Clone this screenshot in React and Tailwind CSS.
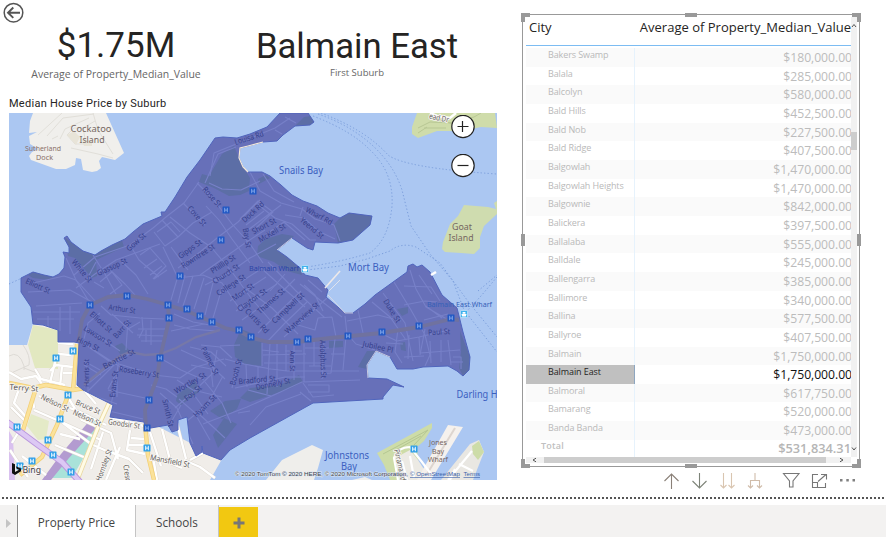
import React from "react";

const LAND =
  "M21 278L33 272L44 275L53 277L59 274L64 268L65 257L63 252L69 253L69 247L64 238L67 236L71 242L83 251L95 255L101 251L112 245L125 239L133 232L143 224L162 216L161 212L165 212L175 197L187 177L200 160L215 138L223 137L237 138L250 134L267 127L280 113H308L314 122L310 125L295 126L283 135L277 141L263 142L248 146L240 148L239 158L243 167L248 172H262L270 176L281 185L292 195L303 201L317 206L328 213L340 218L349 213L372 216L370 225L353 240L338 243L315 242L313 250L307 248L292 238L277 250L287 257L300 268L305 275L318 278L328 290L326 297L345 313H353L365 304L375 295L407 272L408 266L413 264L417 267L422 265L430 272L442 295L457 308L463 332L470 357L469 370L463 376L457 371L448 366L423 367L413 369H397L390 357L376 351L367 365L368 378L387 379L404 387L393 385L383 397V399L313 403L250 438L230 450L221 460L203 453L202 446V452L196 456L190 443L187 417L178 420V430L172 432L168 425L145 429L144 422L110 417L113 405L83 390L77 385L79 343L74 342H58V330L43 325L33 324L31 307L21 292Z";

const WOODS = [
  "M65 238L71 242L83 251L95 255L101 251L122 240L124 247L96 260L97 276L92 278L75 258L68 256Z",
  "M222 154L234 146L239 158L243 167L250 178L249 191L240 195L229 196L214 188L199 182L202 174L209 176Z",
  "M295 126L304 117L311 116L314 122L310 125Z",
  "M340 218L349 213L372 216L370 225L353 240L338 243L334 224Z",
  "M277 250L287 257L300 268L302 275L287 271L274 262L257 256L258 246L266 239L282 234L294 236Z",
  "M241 329L251 333L262 343L262 366L245 364L235 357L234 345Z",
  "M28 275L33 272L53 277L48 280L33 278Z",
  "M460 331L470 357L469 370L463 376L459 368L461 352Z",
  "M367 351L376 351L367 365V369L358 367Z",
  "M250 388L280 385L299 375L303 382L289 389L250 402L240 398Z",
  "M115 346L122 343L131 352L122 357Z",
  "M177 395L195 381L200 391L181 405L176 401Z",
  "M210 411L225 401L241 399L237 409L222 419Z",
  "M213 435L224 418L237 424L218 448Z",
  "M258 179L266 175L270 178L259 184Z",
  "M397 309L408 307L408 313L402 316Z",
  "M329 341L343 341V347L329 348Z",
  "M400 343L405 342L406 351L401 350Z",
];

const MINOR = [
  "M33 283L64 276L76 280L97 303M28 292L70 290L92 302M33 312H80M36 306L82 303M60 307V331M70 306V334M48 316V326M37 319H74",
  "M66 258L76 280L88 300M74 275L95 257L130 245L153 228M93 255L105 274L117 296M96 262L86 281M76 288L95 274L116 260L160 244",
  "M130 245L139 260L159 277M120 260L136 275L148 294M108 268L125 284L135 295M100 282L112 272L122 285L110 294M94 282L104 288M140 255L150 248L166 266L153 279M144 268L157 259M150 275L162 266M154 279L167 270",
  "M153 228L166 217L184 203L199 182M162 220L178 237L165 246L154 232M157 232L171 222L180 232M178 237L193 223L212 212M170 217L190 233L211 247L232 272L251 298L270 320",
  "M197 183L214 200L232 224L250 244L263 263M206 206L219 220L232 239L250 263M183 203L205 225M209 183L222 189L241 190L260 181M205 183L218 154L236 147",
  "M163 247L178 278L203 275L222 283L241 311M171 247L188 270M178 276L171 300M185 275L178 303M193 276L183 306M204 278L194 309M213 283L205 315M222 288L213 318",
  "M178 268L200 252L217 238L238 222L260 200M200 275L221 260L245 243L265 230M205 285L229 273L250 258L276 244M222 293L244 280L264 267M230 301L246 290L266 277M236 311L255 298L277 284M242 320L262 306L286 288M258 333L279 312L301 291M267 342L285 323L307 302M284 337L303 320L327 298",
  "M261 268L281 286L305 307M268 262L295 290L325 318M248 290L272 308L298 334M285 274L270 291M295 279L282 292M304 285L315 295L323 311M300 284L320 300L342 317M308 280L322 292M298 325L315 330L318 318L332 317L336 337",
  "M250 172L260 191L281 203L302 209L315 219L334 225L340 241M263 174L274 191L294 202M256 203L275 218L292 224M240 219L258 201L273 212L256 228M246 225L264 211M248 230L281 205M285 215L304 218L318 231L335 239M265 235L284 222L305 240M300 216L303 207M292 224L310 240H316",
  "M210 176L214 153L246 140L275 128L290 118M275 130L282 134M285 117L296 123",
  "M101 306L111 315L140 318L164 319M112 314L133 333M128 319L126 350M142 317L143 330L139 338M100 313L88 323L83 343L125 370M88 329L120 351M83 343L109 361M140 322L128 329",
  "M138 329H167M137 335L165 336M151 320V345M141 341H163M146 330V342M120 360L101 373L84 387M119 358L116 380L109 415M119 364L132 368L158 375M118 370L108 389M84 365L101 375M130 353L115 364L87 392",
  "M100 370L84 361M88 377V393M94 396L117 404M108 390L145 398M117 380V397M109 411L143 419M151 385L166 389L177 397M154 375L180 378L196 367L224 359",
  "M171 331L204 324L220 327M174 325L190 329L217 331M174 314L193 322L210 325M160 358L181 370L204 380M181 350L207 362L225 379M190 347L211 352L226 366M191 365L211 369L213 387M201 345L220 347L232 358",
  "M177 380L193 390L222 397M160 393L177 408L193 444M179 399L194 412L210 440M192 392L208 414M205 382L222 403L231 423M223 376L207 405L187 421M175 408L192 393L213 373L217 350M199 414L225 438M181 405L170 424M203 424L247 407L274 395L302 382L360 380",
  "M220 346L240 345M225 359L244 364L271 369L287 371H359M262 343V366M262 350L279 352M237 367L232 388M246 365L247 387M258 367V383M270 343L267 394M277 344V387M286 345V371M294 343V380M304 343V382M314 341V366M324 340L322 379M335 339L331 373L320 374M263 355L306 354M264 363H323M305 348H329M309 366H331M331 354H345M285 351H302M346 336L343 370",
  "M235 388L285 377L305 377M303 383L313 397L334 395M308 385H329V392H308M248 390L271 396M238 413L250 411M300 392L311 401M250 425L266 407L301 394",
  "M345 316L347 334L356 344L375 350M358 310L363 333M347 321L378 315L401 321M372 302L390 317L406 340M383 293L405 323L413 361M394 282L411 310L425 335L430 355L425 366M398 329L395 352L402 363M409 335L408 359M425 329L420 355",
  "M380 333L397 341L419 337L449 330M386 343L403 344M404 357L424 356M419 337L420 353L460 350M430 341L431 363M441 340V362M448 340L451 365M404 286L431 287L440 301M410 270L416 289L426 307L450 321M404 305L425 301L437 302M426 306L442 318M419 275L432 294M424 320L448 314M453 357H461V369M450 362H463",
];

const GREY_ROADS = [
  "M78 345L82 320L90 305L108 297L127 295L147 299L168 305L187 311L212 322L225 328L239 331L252 338L268 342L297 342L330 338L382 333L419 327L451 319L459 320",
  "M168 305L169 320L160 358L157 378L151 394L145 410L146 429",
];

const LOCAL_STREETS =
  "M58 343L73 344M58 354L71 355M50 371L56 365L73 367M35 369L41 379L65 385M56 358L50 383M62 366L60 387M63 373H73M9 372L21 379L36 376L42 384M20 386L14 403L27 418M11 407L25 421L12 443M39 396L80 412L106 425M34 410L66 424L101 440M33 400L34 408M81 388L105 399M84 390L96 404M69 399L82 420L111 433L118 459M63 423L91 444L111 453M60 434L80 439M55 445L86 458M110 417L144 426M130 430L127 450L145 454M131 438L144 439M128 445H145M103 432L91 469M120 447L106 480M150 455L182 468M150 432L161 466M162 429L170 460M177 423L186 459M153 457L157 480M10 450L28 477M22 456L46 475M184 460L200 467L215 478M110 452L129 459L143 473M190 460L203 453";

const STREETS = [
  ["Rose St", 212, 197, 48, 24], ["Cove St", 197, 216, 48, 24], ["Gow St", 136, 242, -42, 23],
  ["Glassop St", 112, 267, -25, 32], ["White St", 82, 271, 50, 27], ["Elliott St", 38, 286, 24, 26],
  ["Gipps St", 190, 249, -35, 27], ["Rowntree St", 198, 256, -33, 38], ["Phillip St", 223, 264, -33, 28],
  ["Church St", 226, 274, -33, 30], ["College St", 231, 285, -33, 33], ["Mort St", 243, 292, -35, 25],
  ["Clayton St", 252, 300, -36, 34], ["Thames St", 271, 301, -42, 34], ["Curtis Rd", 257, 321, 47, 31],
  ["Campbell St", 288, 308, -43, 41], ["Waterview St", 302, 318, -42, 43], ["Louisa Rd", 249, 138, -17, 30],
  ["Dock Rd", 253, 212, -42, 27], ["Short St", 264, 226, -28, 26], ["McKell St", 272, 233, -30, 30],
  ["Bay St", 247, 238, 80, 20], ["Wharf Rd", 319, 216, 28, 29], ["Yeend St", 312, 228, 40, 28],
  ["Arthur St", 122, 309, 8, 27], ["Elliott St", 101, 322, 42, 27], ["Barr St", 122, 329, -48, 22],
  ["Lawson St", 98, 336, 32, 32], ["High St", 88, 344, 25, 24], ["Beattie St", 119, 359, -27, 35],
  ["Harris St", 86, 373, -90, 28], ["Roseberry St", 139, 372, 9, 40], ["Evans St", 114, 384, -83, 27],
  ["Palmer St", 210, 361, 63, 30], ["Booth St", 236, 372, -75, 27], ["Wortley St", 190, 383, -30, 35],
  ["Foy St", 193, 393, -40, 20], ["Hyam St", 205, 406, -45, 29], ["Smith St", 168, 413, 77, 28],
  ["Adolphus St", 323, 359, 88, 38], ["Ann St", 293, 361, 90, 21], ["Bradford St", 257, 380, -5, 37],
  ["Donnelly St", 273, 384, -12, 35], ["Jubilee Pl", 378, 347, 12, 31], ["Duke St", 392, 311, 58, 26],
  ["Paul St", 439, 332, -3, 22],
];

const OUTER_STREETS = [
  ["Mansfield St", 170, 461, 11, 40], ["Goodsir St", 124, 424, 8, 32], ["Bruce St", 88, 407, 23, 26],
  ["Nelson St", 55, 403, 26, 30], ["Nelson St", 87, 418, 24, 30], ["Terry St", 24, 388, 4, 29],
  ["Hornsley St", 104, 465, -70, 33], ["Cresc", 127, 473, 82, 17], ["ead Dr", 439, 118, 12, 20],
  ["Pirrama Rd", 400, 465, 78, 32],
];

const STOPS = [
  [226, 210], [221, 240], [180, 276], [127, 296], [90, 305], [168, 305], [169, 318], [187, 309],
  [200, 316], [212, 322], [239, 330], [251, 337], [160, 358], [149, 400], [147, 428], [297, 342],
  [308, 339], [348, 336], [382, 332], [419, 326], [451, 318], [253, 191],
];
const OUTER_STOPS = [
  [147, 448], [73, 351], [56, 358], [68, 395], [60, 419], [17, 427], [48, 440], [53, 455], [32, 461],
  [20, 466], [71, 472], [414, 449],
];

const PLACES = [
  ["Cockatoo", 91, 132, 41, 9.2, "#75665f"], ["Island", 92, 143, 25, 9.2, "#75665f"],
  ["Sutherland", 43, 151, 36, 7.8, "#8a7068"], ["Dock", 44.5, 160, 17, 7.8, "#8a7068"],
  ["Goat", 462, 230, 20, 9, "#75665f"], ["Island", 461, 241, 25, 9, "#75665f"],
  ["Snails Bay", 301, 173.5, 44, 10.3, "#3c5fc0"], ["Mort Bay", 368.5, 270.5, 41, 10.3, "#3c5fc0"],
  ["Darling H", 477, 398, 41, 10, "#3c5fc0"], ["Johnstons", 347, 458.5, 44, 10, "#3c5fc0"],
  ["Bay", 349, 469.5, 16, 10, "#3c5fc0"], ["Jones", 438, 445, 18, 7.8, "#75665f"],
  ["Bay", 438, 453.5, 12, 7.8, "#75665f"], ["Wharf", 438, 462, 20, 7.8, "#75665f"],
  ["Balmain Wharf", 274, 271, 50, 7.6, "#2b45a8"], ["Balmain East Wharf", 459.5, 307, 65, 7.6, "#3560b8"],
];

function StreetName({ item, color, halo }) {
  const [name, x, y, angle, len] = item;
  return (
    <text
      x="0"
      y="2.6"
      transform={`translate(${x} ${y}) rotate(${angle})`}
      textAnchor="middle"
      textLength={len}
      lengthAdjust="spacingAndGlyphs"
      fontSize="7.8"
      fill={color}
      stroke={halo}
      strokeWidth={halo ? 1.8 : 0}
      paintOrder="stroke"
    >
      {name}
    </text>
  );
}

function Stop({ x, y, fill, mark }) {
  return (
    <g transform={`translate(${x} ${y})`}>
      <rect x="-3.5" y="-3.5" width="7" height="7" rx=".6" fill={fill} />
      <path d="M-1.3 -2.2V2.2M1.3 -2.2V2.2M-1.5 .1H1.5" stroke={mark} strokeWidth="1" fill="none" />
    </g>
  );
}

function Ferry({ x, y }) {
  return (
    <g transform={`translate(${x} ${y})`}>
      <rect x="-3.5" y="-3.5" width="7" height="7" rx="1" fill="#3fb2ee" stroke="#d5ecfb" strokeWidth=".6" />
      <path d="M-2.6 0H2.6L1.8 2.4H-1.8ZM-1.4 -2H1.4V-.3H-1.4Z" fill="#fff" />
    </g>
  );
}

function SuburbMap() {
  return (
    <svg viewBox="9 113 488 367" className="block h-[367px] w-[488px]" fontFamily="'Noto Sans','Open Sans',sans-serif">
      <defs>
        <clipPath id="suburb"><path d={LAND} /></clipPath>
      </defs>
      <rect x="9" y="113" width="488" height="367" fill="#abc7f2" />

      {/* Cockatoo Island */}
      <path d="M33 113H106L124 153L115 160L102 157L99 161L101 168L97 171L92 172L83 170L81 159L76 158L75 165L66 169L56 169L31 160L29 156L32 152L38 149L30 144L29 136L37 132L29 133L30 121Z" fill="#f0efec" />
      <path d="M38 135L62 113M47 136L63 118L94 114M60 139L65 129L89 118M67 135L74 128L83 128L86 144H75ZM93 113L98 130L113 154M52 139L58 136M71 148L98 154L113 158M83 128L95 121" stroke="#e1dfd9" strokeWidth="1" fill="none" />
      <path d="M67 135L74 131L80 137L76 145ZM82 140H92V146H84Z" fill="#e8e4d8" />

      {/* Parkland in the harbour */}
      <path d="M417 113H495L497 128L481 127L462 131L437 131L418 138L412 134V127Z" fill="#cfdcaa" />
      <path d="M418 128L430 122L452 123L462 131M424 128H446M429 116L450 123L474 117L481 113M418 133L427 127" stroke="#b8c794" fill="none" />
      <path d="M430 113L437 116L450 118L456 113" stroke="#fff" strokeWidth="2.5" fill="none" />
      <path d="M497 201L494 203L496 209L488 207L464 205L458 216L450 224L443 242L442 249L445 252L461 253L474 254L480 248V237L484 226L497 214Z" fill="#cfdcaf" />

      {/* Ferry lines */}
      <path d="M321 113Q366 130 388 155Q405 168 497 174M318 114Q350 125 372 145Q394 165 402 190L411 226L430 254L453 281L464 310L497 352M313 116Q352 131 370 150Q394 172 392 206Q389 239 370 253Q340 262 307 267M307 270L340 266L367 259L390 251Q401 242 416 247L440 263L470 304L497 337M497 277L481 296L466 312M9 284L22 278M478 291L497 275" fill="none" stroke="#7b9edc" strokeWidth="1" strokeDasharray="1.3 2.2" />

      {/* Mainland south of the suburb */}
      <path d="M9 345H27L33 324H79L145 420L222 459L210 480H9Z" fill="#f0ede9" />
      <path d="M33 325L58 330V369L48 368H35L28 345Z" fill="#e2e8c0" />
      <path d="M31 414L49 421L46 439L38 440L27 426Z" fill="#e4eac7" />
      <path d="M9 356Q19 350 24 366V370M23 345Q31 356 29 365L9 374M24 368L37 373" fill="none" stroke="#dddad5" />
      <path d="M97 418L101 427L72 478H45L74 444Z" fill="#a9e2d9" />
      <path d="M91 419L95 429L69 458L51 480H42L61 454Z" fill="#b39bd0" />
      <path d="M9 431V480H15L13 438Z" fill="#d9c1ef" />

      {/* Local streets */}
      <g fill="none" strokeLinejoin="round">
        <path d={LOCAL_STREETS} stroke="#dcd7cf" strokeWidth="3.2" />
        <path d={LOCAL_STREETS} stroke="#fff" strokeWidth="2.4" />
      </g>
      <g fill="none" strokeLinejoin="round">
        <path d="M9 383L33 388L46 385L73 390L85 388M36 388L23 430M70 390L57 425L42 457L20 475M77 344L73 390M145 424L148 455L154 480" stroke="#f2cf77" strokeWidth="4.4" />
        <path d="M9 383L33 388L46 385L73 390L85 388M36 388L23 430M70 390L57 425L42 457L20 475M77 344L73 390M145 424L148 455L154 480" stroke="#fbe29a" strokeWidth="2.9" />
        <path d="M109 403L98 427L78 478" stroke="#ead9a0" strokeWidth="4.6" />
        <path d="M109 403L98 427L78 478" stroke="#fffbe6" strokeWidth="3" />
        <path d="M7 422L38 445L62 462L80 482" stroke="#b995dd" strokeWidth="6.4" />
        <path d="M7 422L38 445L62 462L80 482" stroke="#dcc8f4" strokeWidth="4.6" />
      </g>

      {/* Johnstons Bay wharves */}
      <path d="M266 480L282 460L312 445L323 450L318 468L314 480ZM352 480L365 477L372 480Z" fill="#efeeeb" />
      <path d="M377 453L432 423L432 428L424 441L417 447L420 480H390L384 465Z" fill="#cddca8" />
      <path d="M383 454L428 430L414 445M394 451L421 436" stroke="#b5c792" fill="none" />
      <path d="M395 458L410 450L418 460L431 480H402Z" fill="#eceae4" />
      <path d="M448 425L463 427L431 480H417Z" fill="#f5f1ed" />
      <path d="M455 428L427 474" stroke="#ddd5cf" strokeWidth="2" fill="none" />
      <path d="M441 480L470 444L479 440L484 452L473 480Z" fill="#e9e7e2" />
      <path d="M472 446L479 441L484 452L478 460L473 454Z" fill="#cddca8" />
      <path d="M448 480L472 451M459 464L473 471M398 480L394 458Q398 447 410 447L422 462L431 474M402 461L407 480M410 456L414 478M455 469L450 480" stroke="#fff" strokeWidth="2.2" fill="none" />

      {/* Highlighted suburb */}
      <path d={LAND} fill="#6770b9" />
      <g clipPath="url(#suburb)">
        {WOODS.map((d) => <path key={d} d={d} fill="#5c6ea6" />)}
        {MINOR.map((d) => <path key={d} d={d} fill="none" stroke="#7780c8" strokeWidth="1.1" strokeLinejoin="round" />)}
        <path d="M84 385L101 371L120 356L130 352L145 355L160 354L176 348L196 337L220 330" fill="none" stroke="#7678a8" strokeWidth="2.4" />
        {GREY_ROADS.map((d) => <path key={d} d={d} fill="none" stroke="#70729f" strokeWidth="3.8" strokeLinejoin="round" />)}
      </g>
      <path d={LAND} fill="none" stroke="#5065bd" strokeWidth="1" strokeLinejoin="round" />
      <path d="M263 142L248 146L240 148L239 158L243 167L248 172" fill="none" stroke="#f5ead8" strokeWidth="1.2" />
      <path d="M390 357L376 351L367 365L368 378M328 295L345 313H353M292 238L277 250" fill="none" stroke="#e5e0e5" strokeWidth=".8" />
      <path d="M325 288L340 271" stroke="#eee9e9" strokeWidth="1.6" />
      <path d="M329 291L340 280" stroke="#dfe3ed" strokeWidth="1" />
      <path d="M431 275L436 272" stroke="#fff" strokeWidth="2.6" />

      {STREETS.map((s) => <StreetName key={s[0] + s[1]} item={s} color="#353f8b" />)}
      {OUTER_STREETS.map((s) => <StreetName key={s[0] + s[1]} item={s} color="#625c5a" halo="#f7f5f2" />)}
      {STOPS.map(([x, y]) => <Stop key={`${x}-${y}`} x={x} y={y} fill="#2158c4" mark="#7fa4e8" />)}
      {OUTER_STOPS.map(([x, y]) => <Stop key={`${x}-${y}`} x={x} y={y} fill="#2f9fe8" mark="#f0f9ff" />)}
      {PLACES.map(([name, x, y, len, size, color]) => (
        <text key={name + x} x={x} y={y} textAnchor="middle" textLength={len} lengthAdjust="spacingAndGlyphs" fontSize={size} fill={color}>
          {name}
        </text>
      ))}
      <Ferry x={305} y={269} />
      <Ferry x={464} y={314} />

      {/* Provider mark */}
      <path d="M12 463L15 464.2V472L19 469.8L16.8 468.7L15.8 466.2L21 468.4V471.2L15 475L12 473.3Z" fill="#111" />
      <text x="22.5" y="472.5" textLength="18.5" lengthAdjust="spacingAndGlyphs" fontSize="9.5" fill="#444" stroke="#f4f0f6" strokeWidth="1.6" paintOrder="stroke">Bing</text>
      <g fontFamily="'Liberation Sans',sans-serif" fontSize="6.2">
        <text x="235" y="476" textLength="173" lengthAdjust="spacingAndGlyphs" fill="#40444c" stroke="#dfe7f3" strokeWidth="1" paintOrder="stroke">
          © 2020 TomTom © 2020 HERE, © 2020 Microsoft Corporation,
        </text>
        <text x="410" y="476" textLength="50" lengthAdjust="spacingAndGlyphs" fill="#3a5fa8" textDecoration="underline">© OpenStreetMap</text>
        <text x="463.5" y="476" textLength="16.5" lengthAdjust="spacingAndGlyphs" fill="#3a5fa8" textDecoration="underline">Terms</text>
      </g>
    </svg>
  );
}

const ROWS = [
  ["Bakers Swamp", "$180,000.00"], ["Balala", "$285,000.00"], ["Balcolyn", "$580,000.00"],
  ["Bald Hills", "$452,500.00"], ["Bald Nob", "$227,500.00"], ["Bald Ridge", "$407,500.00"],
  ["Balgowlah", "$1,470,000.00"], ["Balgowlah Heights", "$1,470,000.00"], ["Balgownie", "$842,000.00"],
  ["Balickera", "$397,500.00"], ["Ballalaba", "$555,000.00"], ["Balldale", "$245,000.00"],
  ["Ballengarra", "$385,000.00"], ["Ballimore", "$340,000.00"], ["Ballina", "$577,500.00"],
  ["Ballyroe", "$407,500.00"], ["Balmain", "$1,750,000.00"], ["Balmain East", "$1,750,000.00"],
  ["Balmoral", "$617,750.00"], ["Bamarang", "$520,000.00"], ["Banda Banda", "$473,000.00"],
];

function Row({ city, value, index }) {
  const selected = city === "Balmain East";
  return (
    <div className={`flex h-[18.67px] ${index % 2 ? "bg-white" : "bg-[#fafafa]"}`}>
      <div className={`w-[109px] shrink-0 border-r pl-[22px] text-[9px] leading-[13px] tracking-[-0.1px] ${selected ? "border-[#8ea6c0] bg-[#c0c0c0] text-[#252423]" : "border-[#e6f2fc] text-[#b9b9b9]"}`}>
        {city}
      </div>
      <div className={`flex grow justify-end overflow-hidden whitespace-nowrap text-[12.2px] leading-[20px] tracking-[-0.04px] ${selected ? "bg-white text-[#111]" : "text-[#bcbcbc]"}`}>
        <span className="-mr-px">{value}</span>
      </div>
    </div>
  );
}

function Handles() {
  return (
    <>
      <i className="absolute -left-[2px] -top-[2px] size-[9px] border-l-4 border-t-4 border-[#999]" />
      <i className="absolute -right-[2px] -top-[2px] size-[9px] border-r-4 border-t-4 border-[#999]" />
      <i className="absolute -bottom-[2px] -left-[2px] size-[9px] border-b-4 border-l-4 border-[#999]" />
      <i className="absolute -bottom-[2px] -right-[2px] size-[9px] border-b-4 border-r-4 border-[#999]" />
      <i className="absolute -top-[2px] left-[162px] h-1 w-3 bg-[#999]" />
      <i className="absolute -bottom-[2px] left-[162px] h-1 w-3 bg-[#999]" />
      <i className="absolute -left-[2px] top-[219px] h-3 w-1 bg-[#999]" />
      <i className="absolute -right-[2px] top-[219px] h-3 w-1 bg-[#999]" />
    </>
  );
}

function PriceTable() {
  return (
    <div className="relative flex h-[453px] w-[338px] flex-col border border-[#999] pl-[3px] pt-[2px]">
      <div className="flex h-[440px]">
        <div className="w-[325px] overflow-hidden">
          <div className="flex h-[29px] justify-between whitespace-nowrap border-b border-[#7cbcf2] pl-[3px] text-[13px] leading-[20px] text-[#252423]">
            <span>City</span>
            <span className="tracking-[0.01px]">Average of Property_Median_Value</span>
          </div>
          <div className="h-[2px]" />
          {ROWS.map(([city, value], i) => <Row key={city} city={city} value={value} index={i} />)}
          <div className="flex h-[17px]">
            <div className="w-[109px] shrink-0 border-r border-[#e6f2fc] pl-[15px] text-[9px] font-semibold leading-[11px] tracking-[0.2px] text-[#c0c0c0]">Total</div>
            <div className="grow text-right text-[12.8px] font-semibold leading-[17px] text-[#b5b5b5]">$531,834.31</div>
          </div>
        </div>
        <div className="flex w-[6px] flex-col bg-[#f1f1f1]">
          <svg viewBox="0 0 6 14" className="h-[14px] w-[6px]"><path d="M1 10L3 7.5L5 10" fill="none" stroke="#555" /></svg>
          <div className="mt-[101px] h-[18px] w-[6px] bg-[#cdcdcd]" />
          <svg viewBox="0 0 6 14" className="mt-auto h-[14px] w-[6px]"><path d="M1 4.5L3 7L5 4.5" fill="none" stroke="#555" /></svg>
        </div>
      </div>
      <div className="flex h-[6px] w-[325px] items-center justify-between bg-[#f1f1f1]">
        <svg viewBox="0 0 18 6" className="h-[6px] w-[18px]"><path d="M10 1.2L7 3L10 4.8" fill="none" stroke="#555" /></svg>
        <div className="h-[6px] w-[282px] bg-[#cdcdcd]" />
        <svg viewBox="0 0 25 6" className="h-[6px] w-[25px]"><path d="M14 1.2L17 3L14 4.8" fill="none" stroke="#555" /></svg>
      </div>
      <Handles />
    </div>
  );
}

function VisualActions() {
  return (
    <svg viewBox="660 470 200 22" className="h-[22px] w-[200px]" fill="none" stroke="#777" strokeWidth="1.1">
      <path d="M671.5 489V474M664.5 481L671.5 474L678.5 481" stroke="#8a8078" />
      <path d="M699.5 473V488M692.5 481L699.5 488L706.5 481" stroke="#7d8378" />
      <path d="M723.5 473V488M720.5 485L723.5 488L726.5 485M731.5 473V488M728.5 485L731.5 488L734.5 485" stroke="#d9c5b0" />
      <path d="M755 473V480M750.5 488V480.5H759.5V488M748 485.5L750.5 488L753 485.5M757 485.5L759.5 488L762 485.5" stroke="#d0bcaa" />
      <path d="M783.5 473.5H799L793 481V487H789.5V481Z" />
      <path d="M818 474.5H812.5V487.5H825.5V483M812.5 482.5H817.5V487.5M818 481.5L826 474.5M821 474.5H826.5V479.5" />
      <path d="M840 479h2.5v2.5h-2.5zM846.3 479h2.5v2.5h-2.5zM852.5 479h2.5v2.5h-2.5z" fill="#808080" stroke="none" />
    </svg>
  );
}

function ZoomButton({ minus }) {
  return (
    <button className="block size-[24px]">
      <svg viewBox="0 0 24 24" className="size-[24px]">
        <circle cx="12" cy="11.5" r="11.2" fill="#fff" stroke="#222" strokeWidth="1.2" />
        <path d={minus ? "M6.5 11.5H17.5" : "M6.5 11.5H17.5M11.5 6V17"} stroke="#222" strokeWidth="1.2" />
      </svg>
    </button>
  );
}

export default function App() {
  return (
    <div className="flex h-[537px] w-[886px] flex-col overflow-hidden bg-white font-['Open_Sans','Noto_Sans',sans-serif]">
      <div className="flex h-[496px] items-start">
        <section className="w-[497px] pl-[3px] pt-[2px]">
          <svg viewBox="0 0 21 21" className="block size-[21px]" fill="none" stroke="#555" strokeWidth="1.5">
            <circle cx="10.5" cy="10.7" r="9.3" />
            <path d="M17 10.7H5M10.3 5.5L5 10.7L10.3 15.9" strokeWidth="1.9" />
          </svg>
          <div className="flex h-[74px] whitespace-nowrap pt-[5px] font-['Roboto',sans-serif] text-[#252423]">
            <div className="w-[226px] text-center">
              <div className="text-[35px] leading-[36px]">$1.75M</div>
              <div className="pt-[2px] font-['Open_Sans',sans-serif] text-[10.45px] leading-[16px] text-[#666]">Average of Property_Median_Value</div>
            </div>
            <div className="ml-[25px] w-[206px] text-center">
              <div className="text-[34.7px] leading-[36px]">Balmain East</div>
              <div className="pt-[2px] font-['Open_Sans',sans-serif] text-[9.5px] leading-[14px] text-[#666]">First Suburb</div>
            </div>
          </div>
          <h2 className="h-[16px] pl-[6px] font-['Roboto',sans-serif] text-[11px] leading-[14px] tracking-[0.27px] text-[#252423]">Median House Price by Suburb</h2>
          <div className="relative h-[367px] pl-[6px]">
            <SuburbMap />
            <div className="absolute left-[448px] top-[2px] flex flex-col gap-[15px]">
              <ZoomButton />
              <ZoomButton minus />
            </div>
          </div>
        </section>
        <section className="flex w-[363px] flex-col items-end pt-[14px]">
          <PriceTable />
          <div className="pt-[3px]">
            <VisualActions />
          </div>
        </section>
      </div>
      <div className="h-[9px] pl-[2px] pt-px">
        <div className="h-[2px] bg-[repeating-linear-gradient(90deg,#555_0_2px,transparent_2px_4px)]" />
      </div>
      <nav className="flex h-[32px] bg-[#f3f2f1] text-[11.7px] text-[#444]">
        <div className="flex w-[17px] items-center pl-[6px]">
          <svg viewBox="0 0 5 9" className="mt-1 h-[9px] w-[5px]"><path d="M0 0L5 4.5L0 9Z" fill="#c4c4c4" /></svg>
        </div>
        <div className="flex w-[119px] items-center justify-center border-x border-l-[#8a8a8a] border-r-[#c4c4c4] bg-white pt-[3px]">Property Price</div>
        <div className="flex w-[83px] items-center justify-center border-r border-[#c4c4c4] pt-[3px]">Schools</div>
        <div className="mt-[2px] flex w-[39px] items-center justify-center bg-[#f2c811]">
          <svg viewBox="0 0 12 12" className="mt-[2px] size-[12px]"><path d="M6 .5V11.5M.5 6H11.5" stroke="#777" strokeWidth="3" /></svg>
        </div>
      </nav>
    </div>
  );
}
